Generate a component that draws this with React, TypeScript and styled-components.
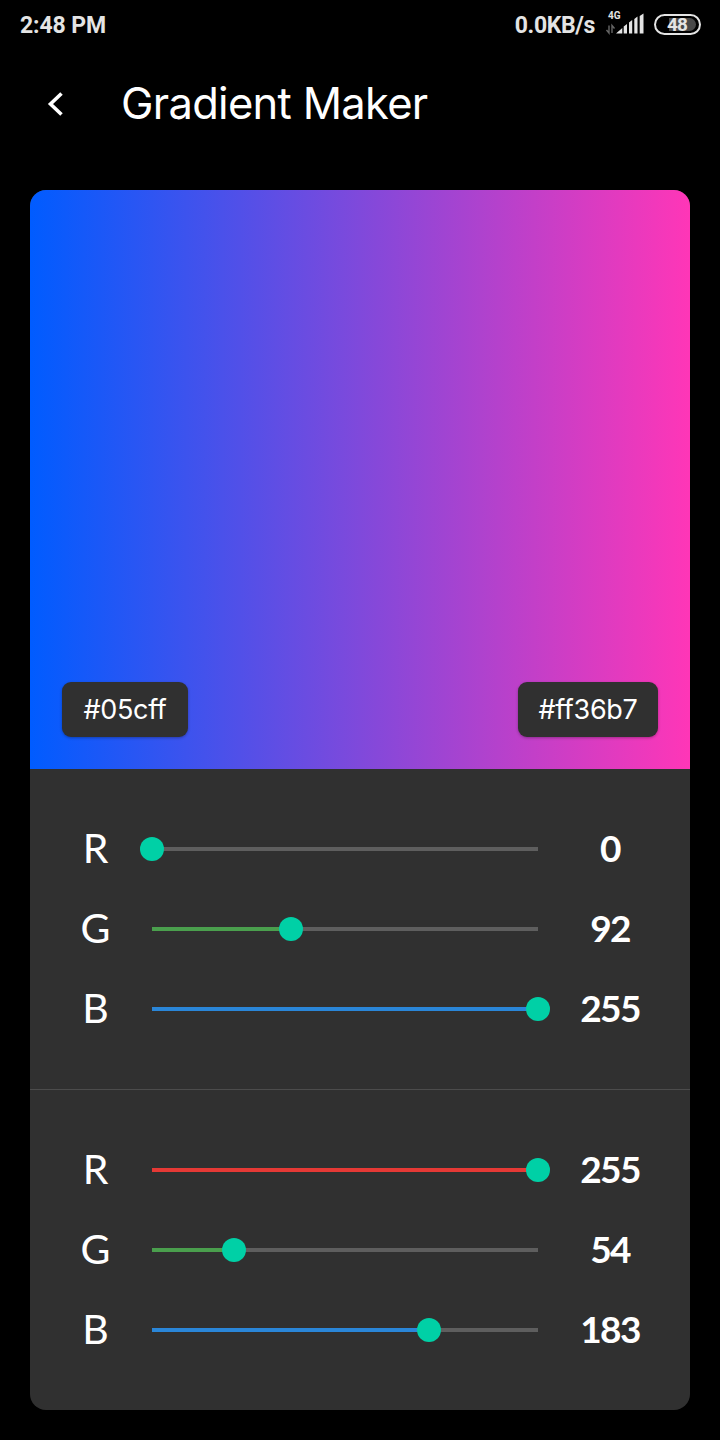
import React from 'react';
import styled, { createGlobalStyle } from 'styled-components';

const GlobalStyle = createGlobalStyle`
  * { box-sizing: border-box; }
  body { margin: 0; background: #000; }
`;

const Screen = styled.main`
  display: flex;
  flex-direction: column;
  width: 720px;
  height: 1440px;
  background: #000;
  color: #fff;
  font-family: Lato, 'Noto Sans', sans-serif;
`;

const StatusBar = styled.div`
  display: flex;
  align-items: center;
  height: 50px;
  padding: 0 19px 0 20px;
  color: #e4e4e4;
  font: 700 23px/50px Roboto, sans-serif;
`;

const Clock = styled.span`
  flex: 1;
  padding-top: 2px;
  letter-spacing: -0.1px;
`;

const Speed = styled.span`
  padding-top: 2px;
  letter-spacing: -0.35px;
  margin-right: 10px;
`;

const Signal = styled.svg`
  width: 40px;
  height: 26px;
  margin: -4px 9px 0 0;
  font: 700 10px Roboto, sans-serif;
`;

const Battery = styled.div`
  width: 47px;
  height: 21px;
  margin-top: -2px;
  padding: 2px;
  border: 2px solid #e4e4e4;
  border-radius: 11px;
`;

const Charge = styled.div`
  width: 38px;
  height: 13px;
  border-radius: 7px;
  background: linear-gradient(90deg, #000 30%, #484848 30%);
  font: 700 19px/14px Roboto, sans-serif;
  letter-spacing: -1px;
  text-align: center;
`;

const Header = styled.header`
  display: flex;
  align-items: center;
  height: 108px;
  padding-left: 46px;
`;

const BackIcon = styled.svg`
  width: 20px;
  height: 28px;
  margin-right: 55px;
`;

const Title = styled.h1`
  margin: -2px 0 0;
  font: 400 43.5px/60px Inter, sans-serif;
  letter-spacing: -0.7px;
`;

const Card = styled.section`
  margin: 32px 30px 0;
  border-radius: 16px;
  overflow: hidden;
  background: #303030;
`;

const Preview = styled.div`
  display: flex;
  justify-content: space-between;
  align-items: flex-end;
  height: 579px;
  padding: 32px;
  background: linear-gradient(90deg, #005cff, #ff36b7);
`;

const HexChip = styled.div<{ $width: number }>`
  width: ${(p) => p.$width}px;
  height: 55px;
  border-radius: 9px;
  background: #303030;
  box-shadow: 0 1px 3px rgba(0, 0, 0, 0.3);
  font: 400 27px/55px Inter, sans-serif;
  letter-spacing: -0.3px;
  text-align: center;
`;

const Channels = styled.div`
  padding: 40px 0;

  & + & {
    border-top: 1px solid #4c4c4c;
  }
`;

const ChannelRow = styled.div`
  display: grid;
  grid-template-columns: 122px 386px 152px;
  align-items: center;
  height: 80px;
`;

const ChannelName = styled.span`
  padding-left: 9px;
  font-size: 41px;
  line-height: 78px;
  height: 80px;
  text-align: center;
`;

const Track = styled.div`
  display: flex;
  align-items: center;
  height: 4px;
  background: #5e5e5e;
`;

const Fill = styled.div<{ $color: string }>`
  flex: none;
  height: 4px;
  background: ${(p) => p.$color};
`;

const Thumb = styled.div`
  flex: none;
  width: 24px;
  height: 24px;
  margin-left: -12px;
  border-radius: 50%;
  background: #00d0a6;
`;

const Value = styled.span`
  height: 80px;
  padding-right: 8px;
  font-size: 37px;
  font-weight: 700;
  line-height: 77px;
  letter-spacing: -1.6px;
  text-align: center;
`;

const channels = [
  { name: 'R', color: '#e53935' },
  { name: 'G', color: '#4a9f4d' },
  { name: 'B', color: '#2a86d8' },
];

const stops = [
  [0, 92, 255],
  [255, 54, 183],
];

export default function App() {
  return (
    <Screen>
      <GlobalStyle />
      <StatusBar>
        <Clock>2:48 PM</Clock>
        <Speed>0.0KB/s</Speed>
        <Signal viewBox="605 10 40 26" fill="#e4e4e4">
          <text x="608" y="19">4G</text>
          <path d="M616 33.5l6.3-5.5v5.5zM623.7 26.5l3.3-2.5v9.5h-3.3zM629 22.5l3.2-2.5v13.5H629zM634.3 19l3.2-2.5v17h-3.2zM639.7 16l3.8-2.5v20h-3.8z" />
          <path d="M609 25.5v7.5l-2.5-3M612 33v-7.5l2.5 3" fill="none" stroke="#666" strokeWidth="1.4" />
        </Signal>
        <Battery><Charge>48</Charge></Battery>
      </StatusBar>
      <Header>
        <BackIcon viewBox="0 0 20 28">
          <path d="M15.5 3.5L4.5 14l11 10.5" fill="none" stroke="#fff" strokeWidth="3.6" />
        </BackIcon>
        <Title>Gradient Maker</Title>
      </Header>
      <Card>
        <Preview>
          <HexChip $width={126}>#05cff</HexChip>
          <HexChip $width={140}>#ff36b7</HexChip>
        </Preview>
        {stops.map((values, s) => (
          <Channels key={s}>
            {channels.map((c, i) => (
              <ChannelRow key={c.name}>
                <ChannelName>{c.name}</ChannelName>
                <Track>
                  <Fill $color={c.color} style={{ width: `${(values[i] / 255) * 100}%` }} />
                  <Thumb />
                </Track>
                <Value>{values[i]}</Value>
              </ChannelRow>
            ))}
          </Channels>
        ))}
      </Card>
    </Screen>
  );
}
